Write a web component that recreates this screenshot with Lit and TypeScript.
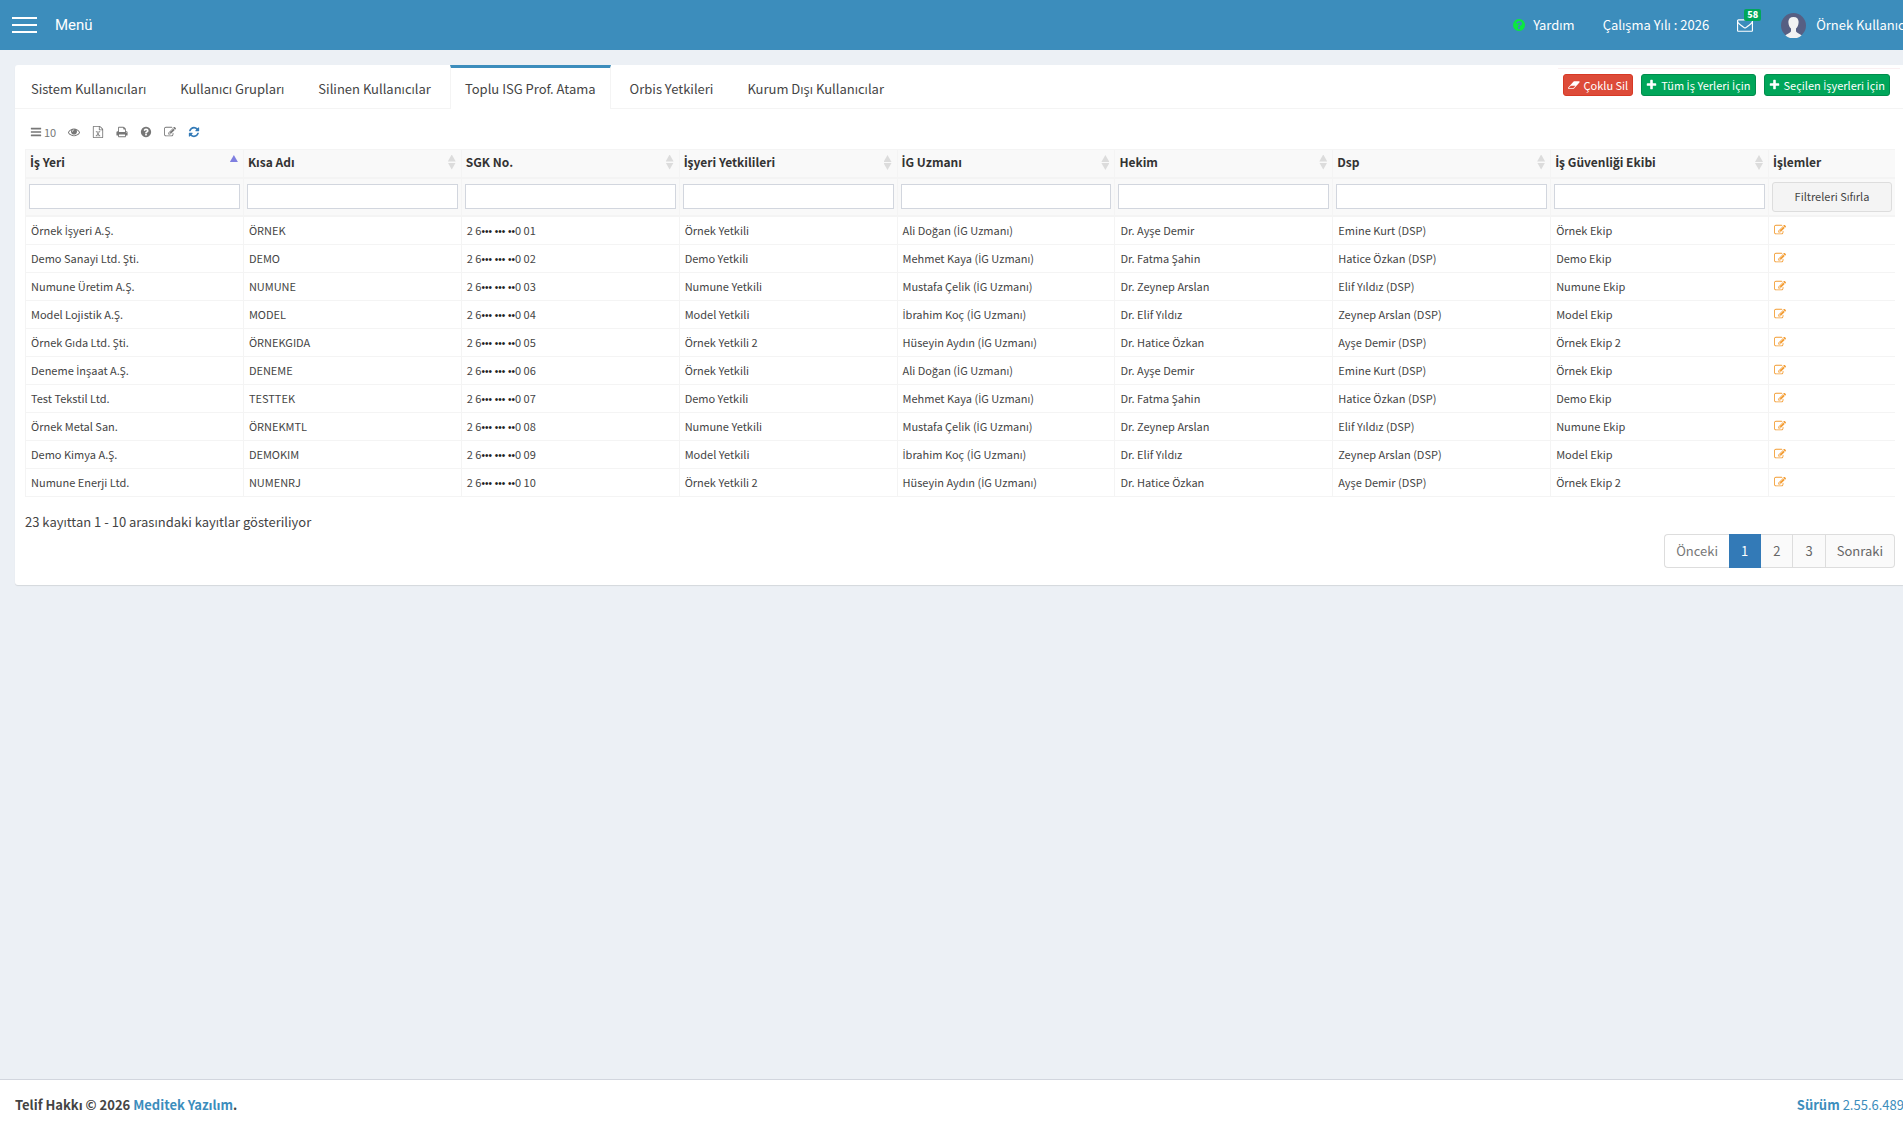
import { LitElement, html, css, svg } from "lit";
import { customElement, property, state } from "lit/decorators.js";
import { classMap } from "lit/directives/class-map.js";

/* Glyph outlines on a 1792-unit grid: [viewBox, path]. */
const ICONS: Record<string, [string, string]> = {
  bars: ["0 0 1792 1792", "M1664 1344v128q0 26-19 45t-45 19h-1408q-26 0-45-19t-19-45v-128q0-26 19-45t45-19h1408q26 0 45 19t19 45zm0-512v128q0 26-19 45t-45 19h-1408q-26 0-45-19t-19-45v-128q0-26 19-45t45-19h1408q26 0 45 19t19 45zm0-512v128q0 26-19 45t-45 19h-1408q-26 0-45-19t-19-45v-128q0-26 19-45t45-19h1408q26 0 45 19t19 45z"],
  eye: ["0 0 1792 1792", "M1664 960q-152-236-381-353 61 104 61 225 0 185-131.5 316.5t-316.5 131.5-316.5-131.5-131.5-316.5q0-121 61-225-229 117-381 353 133 205 333.5 326.5t434.5 121.5 434.5-121.5 333.5-326.5zm-720-384q0-20-14-34t-34-14q-125 0-214.5 89.5t-89.5 214.5q0 20 14 34t34 14 34-14 14-34q0-86 61-147t147-61q20 0 34-14t14-34zm848 384q0 34-20 69-140 230-376.5 368.5t-499.5 138.5-499.5-139-376.5-368q-20-35-20-69t20-69q140-229 376.5-368t499.5-139 499.5 139 376.5 368q20 35 20 69z"],
  edit: ["0 0 1792 1792", "M888 1184l116-116-152-152-116 116v56h96v96h56zm440-720q-16-16-33 1l-350 350q-17 17-1 33t33-1l350-350q17-17 1-33zm80 594v190q0 119-84.5 203.5t-203.5 84.5h-832q-119 0-203.5-84.5t-84.5-203.5v-832q0-119 84.5-203.5t203.5-84.5h832q63 0 117 25 15 7 18 23 3 17-9 29l-49 49q-14 14-32 8-23-6-45-6h-832q-66 0-113 47t-47 113v832q0 66 47 113t113 47h832q66 0 113-47t47-113v-126q0-13 9-22l64-64q15-15 35-7t20 29zm-96-738l288 288-672 672h-288v-288zm444 132l-92 92-288-288 92-92q28-28 68-28t68 28l152 152q28 28 28 68t-28 68z"],
  plus: ["96 0 1600 1792", "M1600 736v192q0 40-28 68t-68 28h-416v416q0 40-28 68t-68 28h-192q-40 0-68-28t-28-68v-416h-416q-40 0-68-28t-28-68v-192q0-40 28-68t68-28h416v-416q0-40 28-68t68-28h192q40 0 68 28t28 68v416h416q40 0 68 28t28 68z"],
  help: ["0 0 1792 1792", "M1024 1376v-192q0-14-9-23t-23-9h-192q-14 0-23 9t-9 23v192q0 14 9 23t23 9h192q14 0 23-9t9-23zm256-672q0-88-55.5-163t-138.5-116-170-41q-243 0-371 213-15 24 8 42l132 100q7 6 19 6 16 0 25-12 53-68 86-92 34-24 86-24 48 0 85.5 26t37.5 59q0 38-20 61t-68 45q-63 28-115.5 86.5t-52.5 125.5v36q0 14 9 23t23 9h192q14 0 23-9t9-23q0-19 21.5-49.5t54.5-49.5q32-18 49-28.5t46-35 44.5-48 28-60.5 12.5-81zm384 192q0 209-103 385.5t-279.5 279.5-385.5 103-385.5-103-279.5-279.5-103-385.5 103-385.5 279.5-279.5 385.5-103 385.5 103 279.5 279.5 103 385.5z"],
  refresh: ["0 0 1792 1792", "M1639 1056q0 5-1 7-64 268-268 434.5t-478 166.5q-146 0-282.5-55t-243.5-157l-129 129q-19 19-45 19t-45-19-19-45v-448q0-26 19-45t45-19h448q26 0 45 19t19 45-19 45l-137 137q71 66 161 102t187 36q134 0 250-65t186-179q11-17 53-117 8-23 30-23h192q13 0 22.5 9.5t9.5 22.5zm25-800v448q0 26-19 45t-45 19h-448q-26 0-45-19t-19-45 19-45l138-138q-148-137-349-137-134 0-250 65t-186 179q-11 17-53 117-8 23-30 23h-199q-13 0-22.5-9.5t-9.5-22.5v-7q65-268 270-434.5t480-166.5q146 0 284 55.5t245 156.5l130-129q19-19 45-19t45 19 19 45z"],
  print: ["0 0 1792 1792", "M448 1536h896v-256h-896v256zm0-640h896v-384h-160q-40 0-68-28t-28-68v-160h-640v640zm1152 64q0-26-19-45t-45-19-45 19-19 45 19 45 45 19 45-19 19-45zm128 0v416q0 13-9.5 22.5t-22.5 9.5h-224v160q0 40-28 68t-68 28h-960q-40 0-68-28t-28-68v-160h-224q-13 0-22.5-9.5t-9.5-22.5v-416q0-79 56.5-135.5t135.5-56.5h64v-544q0-40 28-68t68-28h672q40 0 88 20t76 48l152 152q28 28 48 76t20 88v256h64q79 0 135.5 56.5t56.5 135.5z"],
  excel: ["0 0 1792 1792", "M1596 380q28 28 48 76t20 88v1152q0 40-28 68t-68 28h-1344q-40 0-68-28t-28-68v-1600q0-40 28-68t68-28h896q40 0 88 20t76 48zm-444-244v376h376q-10-29-22-41l-313-313q-12-12-41-22zm384 1528v-1024h-416q-40 0-68-28t-28-68v-416h-768v1536h1280zm-979-234v106h281v-106h-75l103-161q5-7 10-16.5t7.5-13.5 3.500-4h2q1 4 5 10 2 4 4.500 7.500t6 8 6.500 8.500l107 161h-76v106h291v-106h-68l-192-273 195-282h67v-107h-279v107h74l-103 159q-4 7-10 16.500t-9 13.500l-2 3h-2q-1-4-5-10-6-11-17-23l-106-159h76v-107h-290v107h68l189 272-194 283h-68z"],
  eraser: ["-64 0 1984 1792", "M832 1408l336-384h-768l-336 384h768zm1013-1077q15 34 9.5 71.5t-30.5 65.5l-896 1024q-38 44-96 44h-768q-38 0-69.5-20.5t-47.5-54.5q-15-34-9.5-71.5t30.5-65.5l896-1024q38-44 96-44h768q38 0 69.5 20.5t47.5 54.5z"],
  envelope: ["0 0 1792 1792", "M1664 1504v-768q-32 36-69 66-268 206-426 338-51 43-83 67t-86.5 48.5-102.5 24.5h-2q-48 0-102.5-24.5t-86.5-48.5-83-67q-158-132-426-338-37-30-69-66v768q0 13 9.5 22.5t22.5 9.5h1472q13 0 22.5-9.5t9.5-22.5zm0-1051v-24.5l-.5-13-3-12.5-5.5-9-9-7.5-14-2.5h-1472q-13 0-22.5 9.5t-9.5 22.5q0 168 147 284 193 152 401 317 6 5 35 29.5t46 37.5 44.5 31.5 50.5 27.5 43 9h2q20 0 43-9t50.5-27.5 44.5-31.5 46-37.5 35-29.5q208-165 401-317 54-43 100.5-115.5t46.5-131.5zm128-37v1088q0 66-47 113t-113 47h-1472q-66 0-113-47t-47-113v-1088q0-66 47-113t113-47h1472q66 0 113 47t47 113z"],
};

@customElement("fa-icon")
class FaIcon extends LitElement {
  static styles = css`
    :host { display: inline-flex; flex: none; width: 12px; height: 12px; }
    .glyph { width: 100%; height: 100%; fill: currentColor; display: block; }
  `;
  @property() name = "bars";
  render() {
    const [box, d] = ICONS[this.name];
    return html`<svg class="glyph" viewBox=${box} aria-hidden="true">${svg`<path d=${d}></path>`}</svg>`;
  }
}

/* The main family has no dotted capital I and only a wide bullet,
   so those runs are set in a second family. */
const text = (value: string) =>
  value.split(/(İ+|•[• ]*•)/).map((part) =>
    part.startsWith("İ") ? html`<span class="dotted">${part}</span>`
      : part.startsWith("•") ? html`<span class="mask">${part}</span>`
        : part);

const TABS = ["Sistem Kullanıcıları", "Kullanıcı Grupları", "Silinen Kullanıcılar", "Toplu ISG Prof. Atama", "Orbis Yetkileri", "Kurum Dışı Kullanıcılar"];

const COLUMNS = ["İş Yeri", "Kısa Adı", "SGK No.", "İşyeri Yetkilileri", "İG Uzmanı", "Hekim", "Dsp", "İş Güvenliği Ekibi"];

const WORKPLACES = [
  ["Örnek İşyeri A.Ş.", "ÖRNEK"],
  ["Demo Sanayi Ltd. Şti.", "DEMO"],
  ["Numune Üretim A.Ş.", "NUMUNE"],
  ["Model Lojistik A.Ş.", "MODEL"],
  ["Örnek Gıda Ltd. Şti.", "ÖRNEKGIDA"],
  ["Deneme İnşaat A.Ş.", "DENEME"],
  ["Test Tekstil Ltd.", "TESTTEK"],
  ["Örnek Metal San.", "ÖRNEKMTL"],
  ["Demo Kimya A.Ş.", "DEMOKIM"],
  ["Numune Enerji Ltd.", "NUMENRJ"],
];

const TEAMS = [
  ["Örnek Yetkili", "Ali Doğan (İG Uzmanı)", "Dr. Ayşe Demir", "Emine Kurt (DSP)", "Örnek Ekip"],
  ["Demo Yetkili", "Mehmet Kaya (İG Uzmanı)", "Dr. Fatma Şahin", "Hatice Özkan (DSP)", "Demo Ekip"],
  ["Numune Yetkili", "Mustafa Çelik (İG Uzmanı)", "Dr. Zeynep Arslan", "Elif Yıldız (DSP)", "Numune Ekip"],
  ["Model Yetkili", "İbrahim Koç (İG Uzmanı)", "Dr. Elif Yıldız", "Zeynep Arslan (DSP)", "Model Ekip"],
  ["Örnek Yetkili 2", "Hüseyin Aydın (İG Uzmanı)", "Dr. Hatice Özkan", "Ayşe Demir (DSP)", "Örnek Ekip 2"],
];

@customElement("app-root")
class AppRoot extends LitElement {
  static styles = css`
    :host {
      display: flex; flex-direction: column; min-height: 100vh; overflow: hidden;
      background: #ecf0f5; color: #444;
      font: 13px/20px "Noto Sans CJK SC", "Open Sans", sans-serif;
    }
    * { box-sizing: border-box; }
    a { color: inherit; text-decoration: none; }
    button, input { font: inherit; color: inherit; margin: 0; border-radius: 0; }
    button { background: none; border: 0; padding: 0; cursor: pointer; }
    .dotted { font-family: "Open Sans", sans-serif; }
    .mask { font-family: "Liberation Sans", sans-serif; font-size: 10px; color: #222; }

    .topbar { display: flex; align-items: center; height: 50px; background: #3c8dbc; color: #fff; white-space: nowrap; }
    .menu { display: flex; align-items: center; gap: 18px; padding-left: 12px; font: 15px/20px Roboto, sans-serif; }
    .burger { display: grid; gap: 5px; width: 25px; }
    .bar { height: 2px; background: #fff; }
    .account { display: flex; align-items: center; gap: 28px; margin: 0 -5px 0 auto; }
    .item { display: flex; align-items: center; gap: 7px; }
    .item.user { gap: 10px; }
    .help-dot { width: 14px; height: 14px; color: #0be83f; }
    .mail { position: relative; display: flex; }
    .mail-icon { width: 16px; height: 16px; }
    .badge {
      position: absolute; left: 7px; top: -8px; padding: 0 3px; border-radius: 2px;
      background: #00a65a; font-size: 9px; line-height: 12px; font-weight: 900;
    }
    .avatar { width: 25px; height: 25px; display: block; }

    .main { flex: 1; padding: 15px 0 15px 15px; }
    .card { background: #fff; border-radius: 3px 0 0 3px; box-shadow: 0 1px 1px rgba(0, 0, 0, .1); padding-bottom: 17px; }
    .tabs { display: flex; height: 44px; padding-left: 1px; border-bottom: 1px solid #f4f4f4; white-space: nowrap; }
    .tab {
      height: 44px; margin-right: 4px; padding: 11px 14px 0; border: solid transparent;
      border-width: 3px 1px 0;
    }
    .tab.active { background: #fff; border-color: #3c8dbc #f4f4f4 transparent; }
    .actions {
      display: flex; gap: 8px; align-items: flex-start; margin: 3px 3px 0 auto; padding: 5px 10px 0 5px;
      border-top: 1px solid #f9f0f2;
    }
    .action {
      display: flex; align-items: center; gap: 4px; height: 22px; padding: 0 4px; border-radius: 3px;
      border: 1px solid #008d4c; background: #00a65a; color: #fff; font-size: 11px; line-height: 18px;
    }
    .action.danger { background: #dd4b39; border-color: #d73925; }
    .add { width: 11px; }

    .toolbar { display: flex; align-items: center; gap: 12px; height: 40px; padding: 6px 15px 0; color: #777; }
    .tool { display: flex; align-items: center; gap: 2px; font-size: 11px; line-height: 16px; }
    .tool.accent { color: #337ab7; }

    .panel { padding: 0 8px 0 10px; }
    .grid { width: 100%; table-layout: fixed; border-collapse: separate; border-spacing: 0; font-size: 11px; line-height: 16px; }
    .last { width: 127px; }
    .grid th, .grid td { border-left: 1px solid #f4f4f4; text-align: left; font-weight: 400; white-space: nowrap; vertical-align: top; }
    .head th { height: 30px; padding: 4px 5px 0 4px; background: #f9f9f9; border-top: 1px solid #f4f4f4; border-bottom: 2px solid #f4f4f4; font-size: 12px; font-weight: 700; color: #333; }
    .sort { display: flex; width: 100%; align-items: center; justify-content: space-between; font-weight: 700; }
    .arrows { display: grid; gap: 1px; width: 8px; height: 15px; }
    .up, .down { width: 8px; height: 7px; background: #dcdcdc; }
    .up { clip-path: polygon(50% 0, 100% 100%, 0 100%); }
    .down { clip-path: polygon(0 0, 100% 0, 50% 100%); }
    .sorted .up { background: #7f7fe0; }
    .sorted .down { visibility: hidden; }
    .filters td { height: 38px; padding: 5px 3px 0; background: #f9f9f9; border-bottom: 2px solid #f4f4f4; }
    .filters .clear { padding-top: 3px; }
    .filter { display: block; width: 100%; height: 25px; padding: 0 4px; background: #fff; border: 1px solid #d2d6de; }
    .reset { display: block; width: 100%; height: 30px; padding-bottom: 2px; border: 1px solid #ddd; border-radius: 3px; background: #f4f4f4; text-align: center; }
    .row td { height: 28px; padding: 5px 5px 0; border-bottom: 1px solid #f4f4f4; }
    .edit { display: flex; align-items: center; height: 16px; color: #f39c32; }

    .info { padding-top: 15px; }
    .pager { display: flex; justify-content: flex-end; padding-top: 2px; color: #666; }
    .page { height: 34px; padding: 6px 12px; border: 1px solid #ddd; border-left-width: 0; background: #fafafa; }
    .page.first { padding: 6px 11px; border-left-width: 1px; border-right-width: 0; border-radius: 4px 0 0 4px; background: #fff; color: #777; }
    .page.end { padding: 6px 11px; border-radius: 0 4px 4px 0; }
    .page.current { background: #337ab7; border-color: #337ab7; color: #fff; }

    .footer { display: flex; justify-content: space-between; padding: 15px 0 15px 15px; border-top: 1px solid #d2d6de; background: #fff; white-space: nowrap; font-weight: 700; }
    .link { color: #3c8dbc; }
    .version { margin-right: -1px; color: #3c8dbc; }
    .number { font-weight: 400; }
  `;

  @state() private activeTab = 3;

  render() {
    return html`
      <header class="topbar">
        <button class="menu"><span class="burger"><span class="bar"></span><span class="bar"></span><span class="bar"></span></span>Menü</button>
        <nav class="account">
          <a class="item" href="#yardim"><fa-icon class="help-dot" name="help"></fa-icon>Yardım</a>
          <a class="item" href="#yil">Çalışma Yılı : 2026</a>
          <a class="mail" href="#mesajlar"><fa-icon class="mail-icon" name="envelope"></fa-icon><span class="badge">58</span></a>
          <a class="item user" href="#hesap">
            <svg class="avatar" viewBox="0 0 25 25" aria-hidden="true">
              <circle cx="12.500" cy="12.500" r="12.500" fill="#565f83"></circle>
              <path fill="#f1f2f2" d="M12.500 4c-3.500 0-5.300 2.300-5.100 5.200.1 2.600 1.100 5 2.600 6.300v2.700c-.4 1.700-3.600 2.300-5.600 4.300a12.500 12.500 0 0 0 16.200 0c-2-2-5.200-2.600-5.600-4.300v-2.700c1.500-1.300 2.500-3.700 2.600-6.300.2-2.900-1.600-5.200-5.100-5.200z"></path>
            </svg>Örnek Kullanıcı</a>
        </nav>
      </header>
      <main class="main">
        <section class="card">
          <div class="tabs">
            ${TABS.map((t, i) => html`<a class=${classMap({ tab: true, active: i === this.activeTab })} href="#sekme-${i + 1}" @click=${() => (this.activeTab = i)}>${t}</a>`)}
            <div class="actions">
              <button class="action danger"><fa-icon name="eraser"></fa-icon>Çoklu Sil</button>
              <button class="action"><fa-icon class="add" name="plus"></fa-icon><span>${text("Tüm İş Yerleri İçin")}</span></button>
              <button class="action"><fa-icon class="add" name="plus"></fa-icon><span>${text("Seçilen İşyerleri İçin")}</span></button>
            </div>
          </div>
          <div class="toolbar">
            <button class="tool"><fa-icon name="bars"></fa-icon>10</button>
            <button class="tool" aria-label="Görünüm"><fa-icon name="eye"></fa-icon></button>
            <button class="tool" aria-label="Excel"><fa-icon name="excel"></fa-icon></button>
            <button class="tool" aria-label="Yazdır"><fa-icon name="print"></fa-icon></button>
            <button class="tool" aria-label="Yardım"><fa-icon name="help"></fa-icon></button>
            <button class="tool" aria-label="Düzenle"><fa-icon name="edit"></fa-icon></button>
            <button class="tool accent" aria-label="Yenile"><fa-icon name="refresh"></fa-icon></button>
          </div>
          <div class="panel">
            <table class="grid">
              <colgroup>${COLUMNS.map(() => html`<col>`)}<col class="last"></colgroup>
              <thead>
                <tr class="head">
                  ${COLUMNS.map((c, i) => html`<th scope="col"><button class=${classMap({ sort: true, sorted: i === 0 })}><span id="col-${i}">${text(c)}</span><span class="arrows"><span class="up"></span><span class="down"></span></span></button></th>`)}
                  <th scope="col">${text("İşlemler")}</th>
                </tr>
                <tr class="filters">
                  ${COLUMNS.map((_, i) => html`<td><input class="filter" type="text" aria-labelledby="col-${i}"></td>`)}
                  <td class="clear"><button class="reset">Filtreleri Sıfırla</button></td>
                </tr>
              </thead>
              <tbody>
                ${WORKPLACES.map(([name, short], i) => {
                  const [officer, ...team] = TEAMS[i % TEAMS.length];
                  const sgk = `2 6••• ••• ••0 ${String(i + 1).padStart(2, "0")}`;
                  return html`<tr class="row">
                    ${[name, short, sgk, officer, ...team].map((v) => html`<td>${text(v)}</td>`)}
                    <td><button class="edit" aria-label="Düzenle"><fa-icon name="edit"></fa-icon></button></td>
                  </tr>`;
                })}
              </tbody>
            </table>
            <div class="info">23 kayıttan 1 - 10 arasındaki kayıtlar gösteriliyor</div>
            <nav class="pager">
              <a class="page first" href="#onceki">Önceki</a>
              <a class="page current" href="#1">1</a>
              <a class="page" href="#2">2</a>
              <a class="page" href="#3">3</a>
              <a class="page end" href="#sonraki">Sonraki</a>
            </nav>
          </div>
        </section>
      </main>
      <footer class="footer">
        <span>Telif Hakkı © 2026 <a class="link" href="#meditek">Meditek Yazılım</a>.</span>
        <span class="version">Sürüm <span class="number">2.55.6.489</span></span>
      </footer>
    `;
  }
}
